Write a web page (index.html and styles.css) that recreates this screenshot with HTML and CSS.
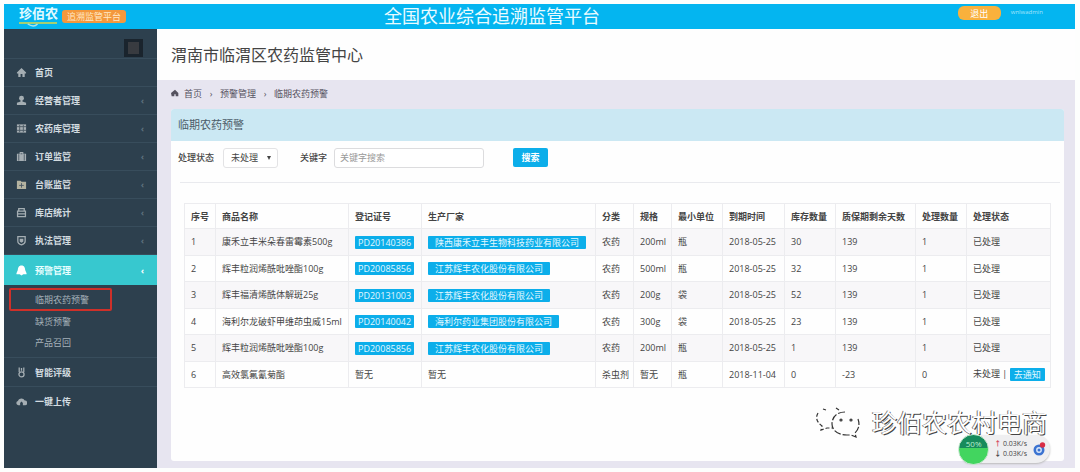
FILE: index.html
```html
<!DOCTYPE html>
<html lang="zh-CN">
<head>
<meta charset="utf-8">
<title>全国农业综合追溯监管平台</title>
<link rel="stylesheet" href="styles.css">
</head>
<body>
<div class="app">
  <header class="topbar">
    <div class="brand">
      <span class="logo">珍佰农<svg class="swoosh" viewBox="0 0 40 7"><path d="M0 2H39" stroke="#a5cf72" stroke-width="2"/><path d="M9 3Q15 7 19 3" fill="none" stroke="#a8e4ee" stroke-width="1.5"/></svg></span>
      <span class="brand-tag">追溯监管平台</span>
    </div>
    <h1 class="platform">全国农业综合追溯监管平台</h1>
    <div class="account">
      <button class="pill" type="button">退出</button>
      <a class="user" href="#">wnlwadmin</a>
    </div>
  </header>
  <div class="body">
    <nav class="sidebar">
      <div class="toggle-row"><button class="toggle" type="button" aria-label="菜单"><span class="toggle-mark"></span></button></div>
      <a class="item" href="#"><svg class="icon" viewBox="0 0 12 12"><path d="M1 6 6 1l5 5v1H9.500v4H7V7.500H5V11H2.500V7H1z"/></svg><span>首页</span></a>
      <a class="item" href="#"><svg class="icon" viewBox="0 0 12 12"><circle cx="6" cy="3.500" r="2.700"/><path d="M5 5h2v2l4 1.500V11H1V8.500L5 7z"/></svg><span>经营者管理</span><i class="arrow">‹</i></a>
      <a class="item" href="#"><svg class="icon" viewBox="0 0 12 12"><path d="M1 1.500h10v9H1z"/><path class="cut" d="M1 4h10M1 8h10M4 2v8M8 2v8"/></svg><span>农药库管理</span><i class="arrow">‹</i></a>
      <a class="item" href="#"><svg class="icon" viewBox="0 0 12 12"><path d="M1 3h3V1h4v2h3v8H1z"/><path class="cut" d="M5 3h2M3 3.500v7M9 3.500v7"/></svg><span>订单监管</span><i class="arrow">‹</i></a>
      <a class="item" href="#"><svg class="icon tan" viewBox="0 0 12 12"><path d="M1 2h4l1 1h5v8H1z"/><path class="cut" d="M6 4.500v5M3.500 7h5"/></svg><span>台账监管</span><i class="arrow">‹</i></a>
      <a class="item" href="#"><svg class="icon" viewBox="0 0 12 12"><path class="line" d="M3 4V1.700h6V4M1.700 4.500h8.600v6H1.700zM2 7.500h8"/></svg><span>库店统计</span><i class="arrow">‹</i></a>
      <a class="item" href="#"><svg class="icon" viewBox="0 0 12 12"><path class="line" d="M2 1.700h8v5Q10 9.500 6 10.800 2 9.500 2 6.700z"/><path d="M4 4h4v3L6 8.500 4 7z"/></svg><span>执法管理</span><i class="arrow">‹</i></a>
      <a class="item active" href="#"><svg class="icon" viewBox="0 0 12 12"><path d="M6 .5C9 .5 10 3 10 5.500L11.500 9v1H8L6 11.500 4 10H.5V9L2 5.500C2 3 3 .5 6 .5z"/></svg><span>预警管理</span><i class="arrow">‹</i></a>
      <div class="submenu">
        <a class="sub marked" href="#">临期农药预警</a>
        <a class="sub" href="#">缺货预警</a>
        <a class="sub" href="#">产品召回</a>
      </div>
      <a class="item lined" href="#"><svg class="icon" viewBox="0 0 12 12"><path class="line" d="M3.500.5v5M8.500.5v5M6 1v3"/><circle class="line" cx="6" cy="8" r="2.800"/></svg><span>智能评级</span></a>
      <a class="item" href="#"><svg class="icon" viewBox="0 0 12 12"><path d="M2.500 10A2.300 2.300 0 0 1 2 5.500 4 4 0 0 1 9.500 5 2.500 2.500 0 0 1 10 10H7.500V7.500L6 6 4.500 7.500V10z"/></svg><span>一键上传</span></a>
    </nav>
    <main class="main">
      <h2 class="org">渭南市临渭区农药监管中心</h2>
      <div class="content">
        <div class="crumbs">
          <svg class="crumb-icon" viewBox="0 0 12 12"><path d="M0 6 6 1l5 5v5H7V8H5v3H1z"/></svg>
          <a href="#">首页</a><span class="sep">›</span><a href="#">预警管理</a><span class="sep">›</span><span>临期农药预警</span>
        </div>
        <section class="panel">
          <h3 class="panel-title">临期农药预警</h3>
          <form class="filters">
            <label for="state">处理状态</label>
            <div class="select-box"><select id="state"><option>未处理</option><option>已处理</option></select></div>
            <label class="key-label" for="key">关键字</label>
            <input id="key" class="key" type="text" placeholder="关键字搜索">
            <button class="search" type="button">搜索</button>
          </form>
          <div class="table-wrap">
            <table class="grid">
              <colgroup><col class="w-no"><col class="w-name"><col class="w-reg"><col class="w-maker"><col class="w-kind"><col class="w-kind"><col class="w-mid"><col class="w-date"><col class="w-mid"><col class="w-days"><col class="w-mid"><col class="w-state"></colgroup>
              <thead><tr><th>序号</th><th>商品名称</th><th>登记证号</th><th>生产厂家</th><th>分类</th><th>规格</th><th>最小单位</th><th>到期时间</th><th>库存数量</th><th>质保期剩余天数</th><th>处理数量</th><th>处理状态</th></tr></thead>
              <tbody>
                <tr><td>1</td><td>康禾立丰米朵春雷霉素500g</td><td><a class="tag" href="#">PD20140386</a></td><td><a class="tag wide" href="#">陕西康禾立丰生物科技药业有限公司</a></td><td>农药</td><td>200ml</td><td>瓶</td><td>2018-05-25</td><td>30</td><td>139</td><td>1</td><td>已处理</td></tr>
                <tr><td>2</td><td>辉丰粒润烯酰吡唑酯100g</td><td><a class="tag" href="#">PD20085856</a></td><td><a class="tag wide" href="#">江苏辉丰农化股份有限公司</a></td><td>农药</td><td>500ml</td><td>瓶</td><td>2018-05-25</td><td>32</td><td>139</td><td>1</td><td>已处理</td></tr>
                <tr><td>3</td><td>辉丰福清烯酰体解斑25g</td><td><a class="tag" href="#">PD20131003</a></td><td><a class="tag wide" href="#">江苏辉丰农化股份有限公司</a></td><td>农药</td><td>200g</td><td>袋</td><td>2018-05-25</td><td>52</td><td>139</td><td>1</td><td>已处理</td></tr>
                <tr><td>4</td><td>海利尔龙破虾甲维茚虫威15ml</td><td><a class="tag" href="#">PD20140042</a></td><td><a class="tag wide" href="#">海利尔药业集团股份有限公司</a></td><td>农药</td><td>300g</td><td>袋</td><td>2018-05-25</td><td>23</td><td>139</td><td>1</td><td>已处理</td></tr>
                <tr><td>5</td><td>辉丰粒润烯酰吡唑酯100g</td><td><a class="tag" href="#">PD20085856</a></td><td><a class="tag wide" href="#">江苏辉丰农化股份有限公司</a></td><td>农药</td><td>200ml</td><td>瓶</td><td>2018-05-25</td><td>1</td><td>139</td><td>1</td><td>已处理</td></tr>
                <tr><td>6</td><td>高效氯氟氰菊酯</td><td>暂无</td><td>暂无</td><td>杀虫剂</td><td>暂无</td><td>瓶</td><td>2018-11-04</td><td>0</td><td>-23</td><td>0</td><td>未处理 | <button class="tag notify" type="button">去通知</button></td></tr>
              </tbody>
            </table>
          </div>
        </section>
      </div>
    </main>
  </div>
  <div class="speed">
    <span class="ball">50%</span>
    <div class="rates"><span><b class="up">↑</b> 0.03K/s</span><span><b>↓</b> 0.03K/s</span></div>
    <svg class="orb" viewBox="0 0 14 14"><circle cx="7" cy="8" r="4.200" fill="#d9e7fa" stroke="#3b73d1" stroke-width="2.600"/><circle cx="7" cy="8" r="1.500" fill="#3b73d1"/><circle cx="10.500" cy="3" r="2.700" fill="#d92d45"/></svg>
  </div>
  <div class="watermark">
    <svg class="wechat" viewBox="0 0 46 32" fill="none" stroke="#333" stroke-width="1.200"><path d="M3 7Q-1 14 7 20l-1 4 6-2 6 0" stroke-dasharray="4 2"/><path d="M8 3l3 1M21 2l3 2"/><path d="M30 6C22 6 17 11 17 18s7 11 15 11l4 0 5 2-1-4Q46 21 43 13" stroke-dasharray="7 2"/><circle cx="26" cy="14" r="1"/><circle cx="36" cy="14" r="1"/></svg>
    <span>珍佰农农村电商</span>
  </div>
</div>
</body>
</html>
```

FILE: styles.css
```css
* { box-sizing: border-box; }
html, body { height: 100%; }
body {
  margin: 0;
  background: #fdfefd;
  color: #444;
  font: 9px/13px "Open Sans", "Noto Sans CJK SC", sans-serif;
}
a { color: inherit; text-decoration: none; }
button, input, select { font: inherit; color: inherit; }
button { border: 0; padding: 0; cursor: pointer; }
h1, h2, h3 { margin: 0; font-weight: 400; }

.app {
  position: relative;
  display: flex;
  flex-direction: column;
  min-height: 100%;
  padding: 4px 5px 4px 4px;
}
.topbar {
  display: grid;
  grid-template-columns: 1fr auto 1fr;
  align-items: center;
  height: 25px;
  background: #04b5f0;
  color: #fff;
}
.brand { display: flex; align-items: center; gap: 4px; padding-left: 15px; }
.logo {
  display: flex;
  flex-direction: column;
  color: #e2faff;
  font-size: 13px;
  font-weight: 700;
  line-height: 15px;
}
.swoosh { width: 39px; height: 7px; }
.brand-tag {
  padding: 0 5px;
  border-radius: 3px;
  background: #f4983c;
  color: #ffe9c8;
}
.platform { color: #e9fbff; font-size: 18px; line-height: 25px; margin-right: 95px; }
.account {
  display: flex;
  align-items: flex-start;
  justify-content: flex-end;
  gap: 10px;
  height: 25px;
  padding: 2px 32px 0 0;
}
.pill { width: 43px; height: 14px; border-radius: 6px; background: #f9b13c; color: #fff; line-height: 13px; }
.user { color: #a9e4fa; font-size: 6px; }

.body { display: flex; flex: 1; }
.sidebar { flex: 0 0 153px; background: #2d404e; color: #d3dce0; }
.toggle-row { display: flex; justify-content: flex-end; height: 30px; padding: 10px 14px 0 0; border-bottom: 1px solid #384d5c; }
.toggle { display: grid; place-items: center; width: 19px; height: 18px; background: #1a242d; }
.toggle-mark { width: 11px; height: 12px; background: #383b40; }
.item {
  display: flex;
  align-items: center;
  gap: 8px;
  height: 28px;
  padding: 0 13px 0 12px;
  border-bottom: 1px solid #384d5c;
  font-weight: 700;
}
.item:last-child { border-bottom: 0; }
.icon { width: 11px; height: 11px; fill: #a5aeb3; }
.icon .cut { fill: none; stroke: #4b5a65; }
.icon .line { fill: none; stroke: #a5aeb3; stroke-width: 1.4; }
.icon.tan { fill: #b4b3a0; }
.arrow { margin-left: auto; color: #5f727f; font-style: normal; }
.active { height: 30px; border: 0; background: #37c8cf; color: #e8ffff; }
.active .icon { fill: #fff; }
.active .arrow { color: #fff; }
.submenu { padding: 3px 5px 4px; color: #a5b1b9; }
.sub { display: flex; align-items: center; height: 21px; padding-left: 26px; }
.marked { width: 103px; height: 23px; padding-left: 24px; border: 2px solid #ce3029; border-radius: 2px; }
.lined { height: 30px; border-top: 1px solid #384d5c; }

.main { display: flex; flex: 1; flex-direction: column; min-width: 0; background: #e7e5f0; }
.org { padding: 14px 14px 13px; background: #fefefe; color: #444; font-size: 16px; line-height: 24px; }
.content { display: flex; flex: 1; flex-direction: column; padding: 0 11px 7px 14px; }
.crumbs { display: flex; align-items: center; height: 29px; padding-bottom: 3px; color: #55525f; }
.crumb-icon { width: 8px; height: 8px; margin-right: 5px; fill: #55525f; }
.sep { width: 18px; text-align: center; }
.panel { flex: 1; border-radius: 3px; background: #fefefe; }
.panel-title { padding: 0 7px; border-radius: 3px 3px 0 0; background: #cbe8f3; color: #4b5c68; font-size: 11px; line-height: 32px; }
.filters {
  display: flex;
  align-items: center;
  height: 42px;
  margin: 0 4px 0 9px;
  padding-bottom: 8px;
  border-bottom: 1px solid #e9eaee;
}
.filters label { margin-left: -2px; font-weight: 500; }
.select-box { position: relative; margin-left: 9px; }
.select-box select {
  appearance: none;
  width: 55px;
  height: 20px;
  padding: 0 7px;
  border: 1px solid #e3e3e5;
  border-radius: 3px;
  background: #fff;
}
.select-box::after {
  content: "";
  position: absolute;
  top: 8px;
  right: 7px;
  border: 2px solid transparent;
  border-top: 4px solid #444;
  pointer-events: none;
}
.filters .key-label { margin-left: 22px; }
.key { width: 150px; height: 20px; margin-left: 7px; padding: 0 5px; border: 1px solid #dcdcde; border-radius: 3px; background: #fff; }
.key::placeholder { color: #999; }
.search { width: 35px; height: 19px; margin-left: 29px; border-radius: 2px; background: #0caeea; color: #fff; font-weight: 700; }

.table-wrap { padding: 20px 14px 0 13px; }
.grid { width: 100%; height: 185px; border-collapse: collapse; table-layout: fixed; }
.grid th, .grid td { padding: 0 0 0 6px; border: 1px solid #ececef; text-align: left; white-space: nowrap; }
.grid th { height: 25px; font-weight: 700; }
.grid tbody tr:nth-child(odd) { background: #f8f7f9; }
.w-no { width: 31px; }
.w-name { width: 133px; }
.w-reg { width: 73px; }
.w-maker { width: 174px; }
.w-kind { width: 38px; }
.w-mid { width: 51px; }
.w-date { width: 62px; }
.w-days { width: 80px; }
.w-state { width: 84px; }
.tag { display: inline-block; padding: 0 3px; border-radius: 1px; background: #0caeea; color: #e3f8ff; vertical-align: middle; }
.wide { padding: 0 7px; }
.notify { padding: 0 4px; }

.watermark {
  position: absolute;
  right: 33px;
  bottom: 32px;
  display: flex;
  align-items: center;
  gap: 11px;
  color: #fff;
  font-size: 25px;
  line-height: 36px;
  text-shadow: 1px 1px 0 #444, -1px 0 0 #777;
  pointer-events: none;
}
.wechat { width: 46px; height: 32px; }
.speed {
  position: absolute;
  right: 30px;
  bottom: 9px;
  display: flex;
  align-items: center;
  gap: 5px;
  height: 28px;
  padding-right: 4px;
  border-radius: 8px 14px 14px 8px;
  background: #efeff1;
  box-shadow: 0 1px 2px #bbb;
}
.ball {
  width: 31px;
  height: 31px;
  margin-left: -4px;
  border: 1px solid #bfe5c9;
  border-radius: 50%;
  background: linear-gradient(#168b5b 45%, #42d55f 45%);
  color: #b8f0cd;
  font-size: 8px;
  line-height: 17px;
  text-align: center;
}
.rates { display: flex; flex-direction: column; font-size: 7px; line-height: 10px; }
.up { color: #d4455b; }
.orb { width: 14px; height: 14px; }
```
